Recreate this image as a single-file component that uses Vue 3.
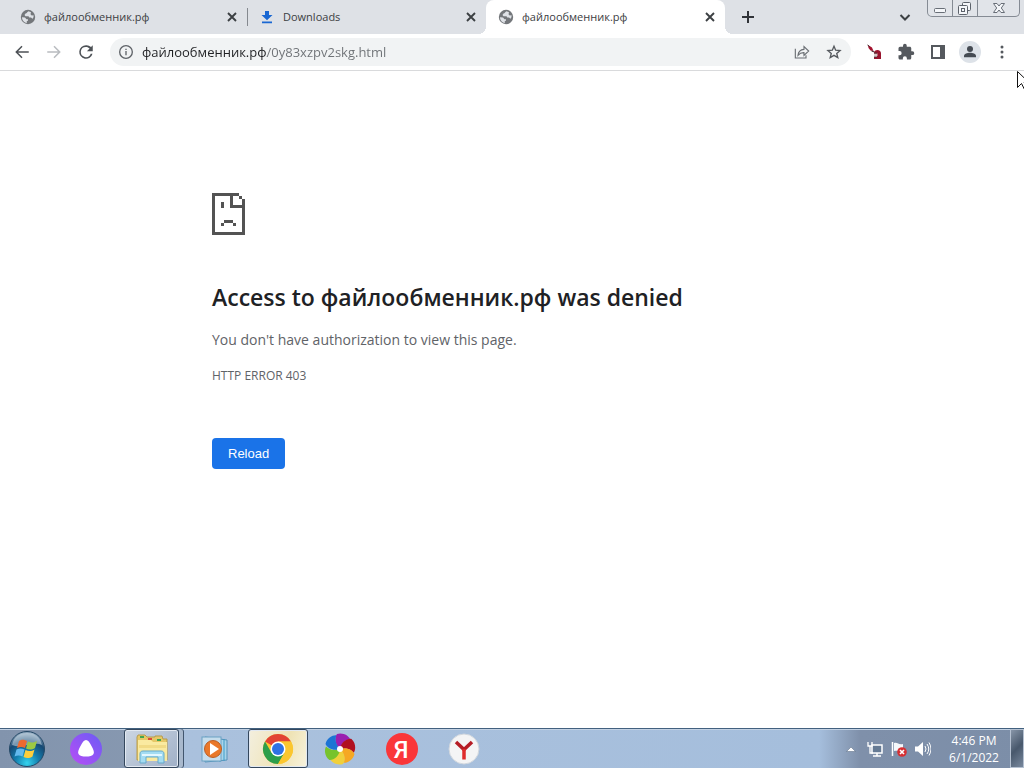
<script setup>
import { ref } from 'vue'

const tabs = [
  { title: 'файлообменник.рф', icon: 'globe', active: false },
  { title: 'Downloads', icon: 'download', active: false },
  { title: 'файлообменник.рф', icon: 'globe', active: true },
]
const address = ref('файлообменник.рф/0y83xzpv2skg.html')
const petals = [
  { angle: 0, color: '#9a1fb0' },
  { angle: 60, color: '#b01020' },
  { angle: 120, color: '#f6a823' },
  { angle: 180, color: '#f0d03c' },
  { angle: 235, color: '#77c32c' },
  { angle: 300, color: '#1c74d4' },
]
</script>

<template>
  <div class="screen">
    <header class="strip">
      <div class="tabs">
        <div v-for="(tab, i) in tabs" :key="i" class="tab" :class="{ active: tab.active }">
          <svg v-if="tab.icon === 'globe'" class="favicon" viewBox="0 0 16 16">
            <circle cx="8" cy="8" r="7.2" fill="#74777b" />
            <path d="M8.500 2.200c-1.800 1-1.500 2-3 2.300L4.500 6l1 1.200h3l.8 1.300h1.700l1.500 1.300c1-1 1.300-2.500 1-3.500l-1.800.2-1.200-1.200.5-2z" fill="#dfe2e7" />
            <path d="M2 8.200l3 .3 1.500 1.700H8v1.500L6.800 12v1.900C4 13.500 2 11 2 8.200z" fill="#dfe2e7" />
          </svg>
          <svg v-else class="favicon" viewBox="0 0 16 16">
            <path d="M6 2h4v4h3.500L8 11.300 2.500 6H6zM3 12.600h10v1.600H3z" fill="#1967d2" />
          </svg>
          <span class="title">{{ tab.title }}</span>
          <button class="close" aria-label="Close tab">
            <svg viewBox="0 0 16 16" width="16" height="16"><path d="M4 4l8 8M12 4l-8 8" stroke="#3c4043" stroke-width="1.900" /></svg>
          </button>
        </div>
      </div>
      <button class="new-tab" aria-label="New tab">
        <svg viewBox="0 0 16 16" width="16" height="16"><path d="M8 2v12M2 8h12" stroke="#303338" stroke-width="2" /></svg>
      </button>
      <span class="grow"></span>
      <button class="search-tabs" aria-label="Search tabs">
        <svg viewBox="0 0 16 16" width="16" height="16"><path d="M3.500 6L8 10.500 12.500 6" fill="none" stroke="#3c4043" stroke-width="2" /></svg>
      </button>
      <div class="window-buttons">
        <button aria-label="Minimize">
          <svg viewBox="0 0 24 16" width="24" height="16"><rect x="6.500" y="8.500" width="11" height="4" rx="1" fill="#f4f6f9" stroke="#686e77" /></svg>
        </button>
        <button aria-label="Restore">
          <svg viewBox="0 0 24 16" width="24" height="16" fill="#f4f6f9" stroke="#5c626b">
            <rect x="9.500" y="2.500" width="8" height="8" rx="1" /><rect x="5.500" y="5.500" width="9" height="9" rx="1" /><rect x="8.500" y="8.500" width="3" height="3" />
          </svg>
        </button>
        <button class="wide" aria-label="Close window">
          <svg viewBox="0 0 40 16" width="40" height="16"><path d="M14.500 3.500h3.500l2 2.500 2-2.500h3.500l-3.200 4.500 3.200 4.500h-3.500l-2-2.500-2 2.500h-3.500l3.200-4.500z" fill="#f4f6f9" stroke="#686e77" /></svg>
        </button>
      </div>
    </header>

    <nav class="toolbar">
      <button class="tool" aria-label="Back">
        <svg viewBox="0 0 24 24"><path d="M21 11H6.800l5.900-5.900L11.300 3.700 3 12l8.300 8.300 1.400-1.400L6.800 13H21z" fill="#4d5156" /></svg>
      </button>
      <button class="tool" aria-label="Forward" disabled>
        <svg viewBox="0 0 24 24"><path d="M3 11h14.200l-5.900-5.900 1.400-1.400L21 12l-8.300 8.300-1.400-1.400 5.900-5.900H3z" fill="#b9bcc0" /></svg>
      </button>
      <button class="tool" aria-label="Reload page">
        <svg viewBox="0 0 24 24"><path d="M18.700 5.300A9 9 0 0 0 12 3a9 9 0 1 0 8.700 11.300h-2.400A6.800 6.800 0 1 1 12 5.200c1.900 0 3.600.8 4.800 2L13.200 11H21V3z" fill="#4d5156" /></svg>
      </button>
      <div class="address">
        <button class="small" aria-label="View site information">
          <svg viewBox="0 0 24 24"><circle cx="12" cy="12" r="9.500" fill="none" stroke="#5f6368" stroke-width="2" /><path d="M11 10.500h2v6.500h-2zM11 7h2v2h-2z" fill="#5f6368" /></svg>
        </button>
        <input v-model="address" type="text" aria-label="Address and search bar" spellcheck="false" />
        <button class="small share" aria-label="Share">
          <svg viewBox="0 0 24 24" fill="none" stroke="#6b6f74" stroke-width="1.700"><path d="M2 7v14h16v-4M6 17c.5-5.500 3.500-8.500 9-9V4l7 6.500-7 6.500v-4c-4-.2-6.500 1-9 4z" /></svg>
        </button>
        <button class="small" aria-label="Bookmark this tab">
          <svg viewBox="0 0 24 24"><path d="M12 3.200l2.500 6.100 6.600.5-5 4.300 1.600 6.400-5.700-3.500-5.700 3.500 1.600-6.400-5-4.300 6.600-.5z" fill="none" stroke="#55595e" stroke-width="2" /></svg>
        </button>
      </div>
      <button class="tool" aria-label="Extension">
        <svg viewBox="0 0 18 18"><path d="M3 2l4 2.500 1.500 3.500-3-.5L3.500 5z" fill="#a3122e" /><path d="M2.500 2l2 1.500M6.500 8l3 1" stroke="#3b2025" /><path d="M9 10c0-2 1.500-3 3.500-3S16 8.500 16 10.500V16H9v-2h3v-2.500H9z" fill="#98142e" /><path d="M9 10.500h3.500V13H9z" fill="#d8c8c8" /><path d="M9 10h3M9 14h3" stroke="#4b3034" /></svg>
      </button>
      <button class="tool" aria-label="Extensions">
        <svg viewBox="0 0 24 24"><path d="M20.500 11H19V7c0-1.100-.9-2-2-2h-4V3.500a2.500 2.500 0 0 0-5 0V5H4a2 2 0 0 0-2 2v3.800h1.500a2.700 2.700 0 0 1 0 5.400H2V20c0 1.100.9 2 2 2h3.800v-1.500a2.700 2.700 0 0 1 5.400 0V22H17a2 2 0 0 0 2-2v-4h1.500a2.500 2.500 0 0 0 0-5z" fill="#55595e" /></svg>
      </button>
      <button class="tool" aria-label="Side panel">
        <svg viewBox="0 0 18 18"><rect x="3" y="3" width="12" height="12" fill="none" stroke="#55595e" stroke-width="2" /><path d="M11 3h4v12h-4z" fill="#55595e" /></svg>
      </button>
      <button class="tool avatar" aria-label="Profile">
        <svg viewBox="0 0 24 24"><circle cx="12" cy="7.500" r="4.500" fill="#454b53" /><path d="M3 20v-2c0-3.500 5-5 9-5s9 1.500 9 5v2z" fill="#454b53" /></svg>
      </button>
      <button class="tool" aria-label="Menu">
        <svg viewBox="0 0 18 18" fill="#55595e"><circle cx="9" cy="4" r="1.500" /><circle cx="9" cy="9" r="1.500" /><circle cx="9" cy="14" r="1.500" /></svg>
      </button>
    </nav>

    <main class="page">
      <article class="error">
        <svg class="sad" viewBox="0 0 11 14" shape-rendering="crispEdges">
          <path d="M0 0h9v1H0zM0 1h1v12H0zM0 13h11v1H0zM10 2h1v11h-1zM9 1h1v1H9zM6 1h1v4H6zM7 4h3v1H7zM3 3h1v2H3zM4 9h3v1H4zM3 10h1v1H3zM7 10h1v1H7z" fill="#535353" />
        </svg>
        <h1>Access to файлообменник.рф was denied</h1>
        <p>You don't have authorization to view this page.</p>
        <div class="code">HTTP ERROR 403</div>
        <button class="reload">Reload</button>
      </article>
    </main>

    <footer class="taskbar">
      <button class="task start" aria-label="Start">
        <svg viewBox="0 0 38 38" width="38" height="38">
          <defs>
            <radialGradient id="orb" cx=".5" cy=".9" r=".85"><stop offset="0" stop-color="#35d3ee" /><stop offset=".4" stop-color="#137eae" /><stop offset=".75" stop-color="#164873" /><stop offset="1" stop-color="#8ba5bc" /></radialGradient>
          </defs>
          <circle cx="19" cy="19" r="17.500" fill="url(#orb)" stroke="#244866" />
          <path d="M4 15C6 6 12 3 19 3s13 3 15 12c-9-4-20 4-30 0z" fill="#d9e6ee" opacity=".5" />
          <path d="M11 11c3-2 5-1.500 8 0l-2 7c-3-1.500-5-1.500-8 0z" fill="#ee6a30" />
          <path d="M20 11.500c3 1.500 5 1.500 9-.5l-2 7c-3 2-6 2-9 .5z" fill="#9cc943" />
          <path d="M8.500 19.500c3-1.500 5-1.500 8 0l-2 7c-3-1.500-5-1.500-8 0z" fill="#63b9ed" />
          <path d="M17.500 20c3 1.500 6 1.500 9-.5l-2 7c-3 2-6 2-9 .5z" fill="#fdce3c" />
        </svg>
      </button>
      <button class="task alice" aria-label="Alice">
        <svg viewBox="0 0 32 32" width="32" height="32">
          <defs><linearGradient id="alice" x1="1" x2="0" y2="1"><stop offset="0" stop-color="#6a5cf5" /><stop offset="1" stop-color="#b84df5" /></linearGradient></defs>
          <circle cx="16" cy="16" r="16" fill="url(#alice)" />
          <path d="M16 7c2 0 3.500 2 5.500 6 2 3.800 3 6 2 8-1 1.900-4 2.500-7.500 2.500S9.500 22.900 8.500 21c-1-2 0-4.200 2-8 2-4 3.500-6 5.500-6z" fill="#fff" />
        </svg>
      </button>
      <button class="task open explorer" aria-label="Windows Explorer">
        <svg viewBox="0 0 34 32" width="34" height="32">
          <path d="M2 4l1-2h7l2 2h8V3h7l1 3h4v21H2z" fill="#e6c867" stroke="#b69b4c" />
          <path d="M5 3h4v2H5zM22 6h4v2h-4z" fill="#41a650" /><path d="M13 5h4v2h-4z" fill="#dc4b37" />
          <path d="M3 7h13l2 2h14v19H3z" fill="#faeaa0" /><path d="M4 12h27v3H4z" fill="#f1db86" />
          <path d="M5 30V21c0-2 1-3 3-3h18c2 0 3 1 3 3v9h-6v-6H11v6z" fill="#a4dcf2" stroke="#65a9cb" />
          <path d="M7 22h20" stroke="#e3f7ff" stroke-width="2" />
        </svg>
      </button>
      <button class="task media" aria-label="Windows Media Player">
        <svg viewBox="0 0 30 28" width="30" height="28">
          <path d="M5 2l22 3v20L5 27z" fill="#a8d4ea" stroke="#5693b9" /><path d="M24 4v22M20 2v25" stroke="#3f9cc8" />
          <rect x="2" y="2" width="19" height="24" fill="#c6ddec" stroke="#6aa2c4" />
          <circle cx="13" cy="14" r="8.500" fill="#ea7829" stroke="#ba5f26" /><path d="M10 8l9 6-9 6z" fill="#fff" />
        </svg>
      </button>
      <button class="task open chrome" aria-label="Google Chrome">
        <svg viewBox="0 0 32 32" width="32" height="32">
          <circle cx="16" cy="16" r="15" fill="#fbc62f" />
          <path d="M16 16L3 8.500A15 15 0 0 1 29 8.500H16z" fill="#e24335" />
          <path d="M3 8.500A15 15 0 0 0 16 31l6.500-11.300L16 16 9.500 19.700z" fill="#2c9e4b" />
          <path d="M16 8.500h13A15 15 0 0 1 16 31l6.500-11.300z" fill="#fbc62f" />
          <circle cx="16" cy="16" r="7.500" fill="#fff" /><circle cx="16" cy="16" r="6" fill="#2f72e4" />
        </svg>
      </button>
      <button class="task" aria-label="Pinwheel">
        <svg viewBox="0 0 32 32" width="32" height="32">
          <path v-for="petal in petals" :key="petal.angle" d="M16 16C11 12 10 5 13 1c6-2 12 2 13 5-5 1-8 4-10 10z" :fill="petal.color" :transform="`rotate(${petal.angle} 16 16)`" />
          <circle cx="16" cy="16" r="3" fill="#fff" />
        </svg>
      </button>
      <button class="task" aria-label="Yandex">
        <svg viewBox="0 0 32 32" width="32" height="32"><circle cx="16" cy="16" r="16" fill="#fa3639" /><text x="15" y="25" text-anchor="middle" class="ya">Я</text></svg>
      </button>
      <button class="task" aria-label="Yandex Browser">
        <svg viewBox="0 0 32 32" width="32" height="32"><circle cx="16" cy="16" r="15" fill="#f4f4f5" stroke="#d0d6dd" /><path d="M8 9l8 7.500L24 9" fill="none" stroke="#b51c25" stroke-width="3.500" /><path d="M16 16v10.500" stroke="#df2b2c" stroke-width="3.500" /></svg>
      </button>
      <div class="tray">
        <button class="tray-icon" aria-label="Show hidden icons"><svg viewBox="0 0 16 16" width="16" height="16"><path d="M3.500 10.500L8 6l4.500 4.500z" fill="#fff" stroke="#53657d" stroke-width=".5" /></svg></button>
        <button class="tray-icon" aria-label="Network">
          <svg viewBox="0 0 16 16" width="16" height="16"><path d="M5 4h10v8H5zM10 12v3M6 15h8" fill="#657a94" stroke="#fff" stroke-width="1.500" /><path d="M1 1v4h4V1M3 5v7h3" fill="none" stroke="#fff" stroke-width="1.300" /></svg>
        </button>
        <button class="tray-icon" aria-label="Action Center">
          <svg viewBox="0 0 16 16" width="16" height="16"><path d="M1.500 1v14" stroke="#fff" stroke-width="1.500" /><path d="M3 2c4-1 4 2 9 1v7c-5 1-5-1-9 0z" fill="#f5f8fb" /><circle cx="11" cy="11" r="4.800" fill="#d63033" /><path d="M9 9l4 4M13 9l-4 4" stroke="#fff" stroke-width="1.600" /></svg>
        </button>
        <button class="tray-icon" aria-label="Volume">
          <svg viewBox="0 0 16 16" width="16" height="16"><path d="M0 5.500h3L8 1v14l-5-4.500H0z" fill="#fff" /><path d="M10 5q2 3 0 6M12 3q3.500 5 0 10M14 1.500q4 6.500 0 13" fill="none" stroke="#fff" /></svg>
        </button>
        <button class="clock"><span>4:46 PM</span><span>6/1/2022</span></button>
      </div>
      <button class="show-desktop" aria-label="Show desktop"></button>
    </footer>

    <svg class="cursor" viewBox="0 0 12 19"><path d="M.5.500v16l4-4 3 6 2.500-1.200-3-5.800H12z" fill="#fff" stroke="#111" /></svg>
  </div>
</template>

<style>
body {
  margin: 0;
}
</style>

<style scoped>
* {
  box-sizing: border-box;
}
.screen {
  position: relative;
  display: flex;
  flex-direction: column;
  min-height: 100vh;
  overflow: hidden;
  background: #fff;
  color: #3c4043;
  font-family: "Open Sans", "Noto Sans", sans-serif;
}
button {
  display: flex;
  align-items: center;
  justify-content: center;
  padding: 0;
  border: 0;
  background: none;
  color: inherit;
  font: inherit;
}
.grow {
  flex: 1;
}
.strip {
  display: flex;
  height: 34px;
  padding: 0 4px 0 8px;
  background: #dee1e6;
}
.tabs {
  display: flex;
  flex: 0 1 717px;
  min-width: 0;
}
.tab {
  position: relative;
  display: flex;
  flex: 1;
  align-items: center;
  min-width: 0;
  padding: 0 7px 0 12px;
}
.tab:first-child::after {
  content: "";
  position: absolute;
  top: 8px;
  right: -1px;
  width: 1px;
  height: 18px;
  background: #85898f;
}
.tab.active {
  border-radius: 8px 8px 0 0;
  background: #fff;
}
.tab.active::before,
.tab.active::after {
  content: "";
  position: absolute;
  bottom: 0;
  width: 8px;
  height: 8px;
}
.tab.active::before {
  right: 100%;
  background: radial-gradient(circle at 0 0, transparent 8px, #fff 8px);
}
.tab.active::after {
  left: 100%;
  background: radial-gradient(circle at 100% 0, transparent 8px, #fff 8px);
}
.favicon {
  flex: none;
  width: 16px;
  height: 16px;
}
.title {
  flex: 1;
  overflow: hidden;
  margin-left: 8px;
  font-size: 11px;
  line-height: 16px;
  white-space: nowrap;
}
.new-tab {
  width: 28px;
  margin-left: 9px;
}
.search-tabs {
  width: 28px;
  margin-right: 8px;
}
.window-buttons {
  display: flex;
  height: 17px;
  border: 1px solid #858b94;
  border-top: 0;
  border-radius: 0 0 5px 5px;
  background: #e1e4e9;
}
.window-buttons button {
  width: 25px;
  border-right: 1px solid #858b94;
}
.window-buttons .wide {
  width: 41px;
  border-right: 0;
}
.toolbar {
  display: flex;
  align-items: center;
  height: 37px;
  padding: 0 8px 0 6px;
  border-bottom: 1px solid #d9dadc;
}
.tool {
  flex: none;
  width: 32px;
  height: 28px;
}
.tool svg {
  width: 18px;
  height: 18px;
}
.tool:last-child {
  width: 28px;
  margin-left: 5px;
}
.avatar {
  width: 22px;
  height: 22px;
  margin: 0 2px 0 5px;
  border-radius: 50%;
  background: #dde2e8;
}
.avatar svg {
  width: 16px;
  height: 16px;
}
.address {
  display: flex;
  flex: 1;
  align-items: center;
  min-width: 0;
  height: 28px;
  margin: 0 7px 0 8px;
  padding: 0 9px 0 8px;
  border-radius: 14px;
  background: #f1f3f4;
}
.small {
  flex: none;
  width: 16px;
  height: 20px;
}
.small svg {
  width: 16px;
  height: 16px;
}
.share {
  margin-right: 16px;
}
.address input {
  flex: 1;
  min-width: 0;
  padding: 0;
  margin: 0 8px;
  border: 0;
  outline: 0;
  background: linear-gradient(to right, #202124 125px, #6d7175 125px);
  background-clip: text;
  color: transparent;
  font: 13px/20px "Open Sans", "Noto Sans", sans-serif;
}
.page {
  flex: 1;
  padding: 0 24px;
}
.error {
  width: 100%;
  max-width: 600px;
  margin: 0 auto;
  padding-top: 122px;
  color: #5f6368;
}
.sad {
  display: block;
  width: 33px;
  height: 42px;
}
h1 {
  margin: 46px 0 0;
  color: #202124;
  font-size: 23px;
  font-weight: 550;
  line-height: 32px;
}
p {
  margin: 15px 0 0;
  font-size: 14px;
  line-height: 24px;
}
.code {
  margin-top: 12px;
  font-size: 12px;
  line-height: 24px;
}
.reload {
  height: 31px;
  margin-top: 50px;
  padding: 0 16px;
  border-radius: 4px;
  background: #1a73e8;
  color: #fff;
  font: 13px/16px "Liberation Sans", sans-serif;
}
.taskbar {
  display: flex;
  align-items: center;
  height: 40px;
  border-top: 1px solid #42617f;
  background: linear-gradient(to right, #8294ad 0, #8899b1 180px, #aac1dd 184px, #a5bedc 80%, #7f90aa 84%, #7c8ea8 100%);
  box-shadow: inset 0 1px #c3d2e4;
}
.task {
  flex: none;
  width: 62px;
  height: 39px;
}
.start {
  width: 54px;
}
.alice {
  width: 64px;
}
.open {
  border: 1px solid #34475d;
  border-radius: 3px;
  box-shadow: inset 0 0 0 1px #e2e9f2;
}
.explorer {
  width: 55px;
  margin: 0 11px 0 6px;
  background: linear-gradient(135deg, #ccd6e3, #a0b0c7);
  box-shadow: inset 0 0 0 1px #e2e9f2, 4px 0 #a9b9cd, 5px 0 #42566e;
}
.media {
  width: 50px;
  margin-right: 8px;
}
.chrome {
  width: 60px;
  background: linear-gradient(110deg, #f3efdf, #efe3b5 60%, #f7f3df);
}
.chrome + .task {
  margin-left: 1px;
}
.ya {
  fill: #fff;
  font: 500 24px Roboto, sans-serif;
}
.tray {
  display: flex;
  flex: 1;
  align-items: center;
  justify-content: flex-end;
}
.tray-icon {
  width: 16px;
  height: 24px;
  margin-right: 8px;
}
.clock {
  flex-direction: column;
  width: 62px;
  margin: 0 5px 0 4px;
  color: #fff;
  font-size: 12px;
  line-height: 17px;
}
.show-desktop {
  width: 14px;
  height: 39px;
  border: 1px solid #b5c1d1;
  background: linear-gradient(135deg, #8795a8, #48586c 50%, #78889d);
}
.cursor {
  position: absolute;
  top: 71px;
  right: -5px;
  width: 12px;
  height: 19px;
}
</style>
